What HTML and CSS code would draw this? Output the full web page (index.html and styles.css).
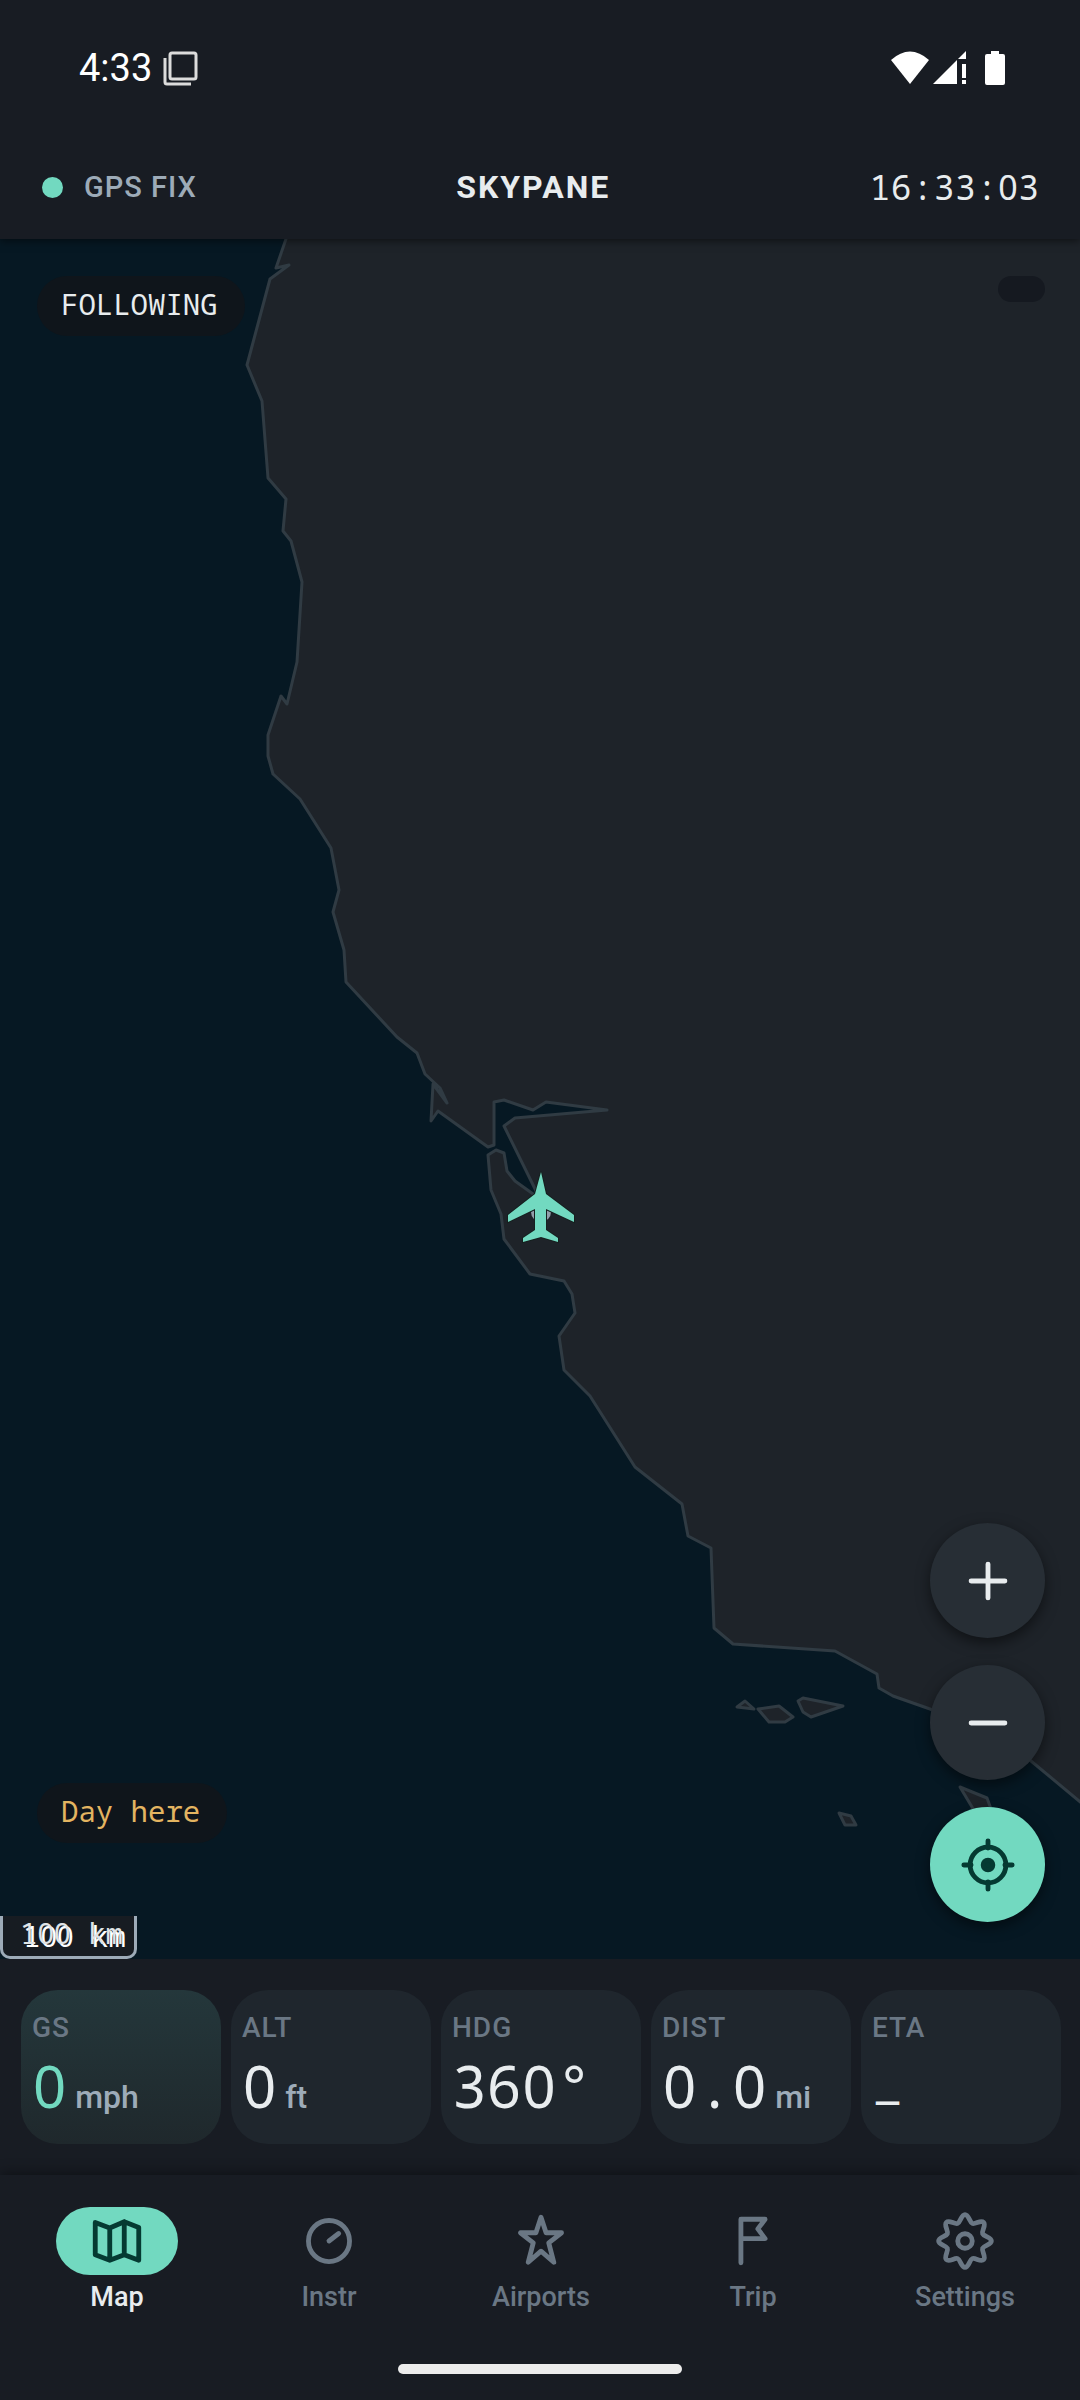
FILE: index.html
```html
<!DOCTYPE html>
<html lang="en">
<head>
  <meta charset="UTF-8">
  <meta name="viewport" content="width=device-width, initial-scale=1.0">
  <title>Skypane</title>
  <link rel="stylesheet" href="styles.css">
</head>
<body>
  <header class="top">
    <div class="status-bar">
      <div class="status-left">
        <span>4:33</span>
        <svg width="36" height="36" viewBox="0 0 36 36" fill="none" stroke="#dcdcdc" stroke-width="3">
          <rect x="8" y="3" width="26" height="26" rx="2"/>
          <path d="M3 8v24q0 2 2 2h24"/>
        </svg>
      </div>
      <svg width="116" height="36" viewBox="0 0 116 36" fill="#fff">
        <path d="M1 10Q20-7 39 10L20 34z"/>
        <path d="M43 34L67 10V34zM68 9l8-8v8zM72 14h4v14h-4zM72 30h4v4h-4z"/>
        <path d="M101 1h8v3h4q2 0 2 2v27q0 2-2 2H97q-2 0-2-2V6q0-2 2-2h4z"/>
      </svg>
    </div>
    <div class="app-bar">
      <div class="gps"><span class="gps-dot"></span>GPS FIX</div>
      <h1 class="title">SKYPANE</h1>
      <time class="clock">16:33:<span class="zero">0</span>3</time>
    </div>
  </header>

  <main class="map">
    <svg class="map-canvas" viewBox="0 239 1080 1720" preserveAspectRatio="xMidYMid slice">
      <g class="land">
        <path d="M287 236L276 268 289 265 270 279 247 365 262 401 268 478 286 499 283 531 291 541 302 582 297 662 287 704 281 696 268 735 268 756 273 774 300 799 331 848 339 890 333 912 344 950 346 982 397 1037 417 1053 425 1074 440 1088 447 1103 433 1084 431 1121 438 1111 488 1147 494 1145 494 1102 504 1100 533 1110 546 1102 607 1110 515 1118 504 1126 540 1199 515 1181 507 1171 504 1153 496 1150 488 1155 491 1190 501 1214 504 1239 530 1274 564 1281 572 1294 575 1313 559 1336 564 1370 590 1396 635 1467 682 1504 688 1536 711 1548 714 1628 733 1644 835 1651 877 1674 879 1688 893 1696 930 1709 1000 1735 1031 1761 1084 1805V236z"/>
        <path d="M737 1707l8-6 9 8z"/>
        <path d="M758 1709l21-3 14 11-8 5h-16z"/>
        <path d="M798 1701l5-3 40 8-32 11-8-5z"/>
        <path d="M839 1813l12 3 5 9h-11z"/>
        <path d="M960 1787l27 11 8 22-20-8z"/>
      </g>
      <circle cx="541" cy="1212" r="10" fill="#929eaa"/>
      <path class="plane" d="M541 1172L546 1194 574 1215V1222L546 1209V1230L558 1238V1242L541 1237 523 1242V1238L535 1230V1209L508 1222V1215L535 1194z"/>
    </svg>

    <div class="map-row">
      <div class="chip">FOLLOWING</div>
      <div class="chip chip-empty"></div>
    </div>

    <div class="map-buttons">
      <button class="fab" aria-label="Zoom in">
        <svg class="icon" viewBox="0 0 24 24"><path d="M12 5v14M5 12h14"/></svg>
      </button>
      <button class="fab" aria-label="Zoom out">
        <svg class="icon" viewBox="0 0 24 24"><path d="M5 12h14"/></svg>
      </button>
      <button class="fab fab-active" aria-label="Follow position">
        <svg class="icon" viewBox="0 0 24 24">
          <circle cx="12" cy="12" r="7.4"/>
          <circle cx="12" cy="12" r="2" fill="currentColor"/>
          <path d="M12 2v3M12 19v3M2 12h3M19 12h3"/>
        </svg>
      </button>
    </div>

    <div class="chip chip-day">Day here</div>
    <div class="scale">1<span class="zero">00</span> km</div>
  </main>

  <section class="readouts">
    <div class="tile tile-active">
      <div class="label">GS</div>
      <div class="value"><span class="zero">0</span><span class="unit">mph</span></div>
    </div>
    <div class="tile">
      <div class="label">ALT</div>
      <div class="value"><span class="zero">0</span><span class="unit">ft</span></div>
    </div>
    <div class="tile">
      <div class="label">HDG</div>
      <div class="value">36<span class="zero">0</span>°</div>
    </div>
    <div class="tile">
      <div class="label">DIST</div>
      <div class="value"><span class="zero">0</span>.<span class="zero">0</span><span class="unit">mi</span></div>
    </div>
    <div class="tile">
      <div class="label">ETA</div>
      <div class="value value-none">–</div>
    </div>
  </section>

  <footer class="bottom">
    <nav class="tabs">
      <a class="tab active" href="#map">
        <span class="tab-icon">
          <svg class="icon" viewBox="0 0 24 24"><path d="M3 4.3l6 2.3 6-2.6 6 2.4V20l-6-2.3L9 20l-6-2.3zM9 6.6V20M15 4v13.7"/></svg>
        </span>
        Map
      </a>
      <a class="tab" href="#instr">
        <span class="tab-icon">
          <svg class="icon" viewBox="0 0 24 24"><circle cx="12" cy="12" r="8.5"/><path d="M12 12l4-3.1"/></svg>
        </span>
        Instr
      </a>
      <a class="tab" href="#airports">
        <span class="tab-icon">
          <svg class="icon" viewBox="0 0 24 24"><path d="M12 2.200l2.100 6.400h6.400l-5.300 4.200 2.100 8L12 16.200l-5.300 4.600 2.100-8L3.500 8.600h6.400z"/></svg>
        </span>
        Airports
      </a>
      <a class="tab" href="#trip">
        <span class="tab-icon">
          <svg class="icon" viewBox="0 0 24 24"><path d="M7 21V3h10l-3 4 3 4H7"/></svg>
        </span>
        Trip
      </a>
      <a class="tab" href="#settings">
        <span class="tab-icon">
          <svg class="icon" viewBox="0 0 24 24">
            <circle cx="12" cy="12" r="3"/>
            <path d="M12 1.100C13.600 1.100 13.820 4.200 15.020 4.700S18.570 3.170 19.700 4.300 18.800 7.780 19.300 8.980 22.900 10.400 22.900 12 19.800 13.820 19.300 15.020 20.830 18.570 19.700 19.700 16.220 18.800 15.020 19.300 13.600 22.900 12 22.900 10.180 19.800 8.980 19.300 5.430 20.830 4.300 19.700 5.200 16.220 4.700 15.020 1.100 13.600 1.100 12 4.200 10.180 4.700 8.980 3.170 5.430 4.300 4.300 7.780 5.200 8.980 4.700 10.400 1.100 12 1.100z"/>
          </svg>
        </span>
        Settings
      </a>
    </nav>
    <div class="home-bar"></div>
  </footer>
</body>
</html>
```

FILE: styles.css
```css
* {
  box-sizing: border-box;
}

body {
  margin: 0;
  min-height: 100vh;
  display: flex;
  flex-direction: column;
  background: #181c23;
  color: #e8ecee;
  font-family: Roboto, sans-serif;
}

.icon {
  display: block;
  width: 58px;
  height: 58px;
  fill: none;
  stroke: currentColor;
  stroke-width: 2;
  stroke-linecap: round;
  stroke-linejoin: round;
}

/* header */

.top {
  position: relative;
  z-index: 1;
  background: #181c23;
  box-shadow: 0 2px 8px rgba(0, 0, 0, 0.5);
}

.status-bar {
  display: flex;
  justify-content: space-between;
  align-items: center;
  height: 135px;
  padding: 0 74px 0 79px;
  color: #fff;
  font-size: 38px;
}

.status-left {
  display: flex;
  align-items: center;
  gap: 10px;
}

.app-bar {
  display: flex;
  justify-content: space-between;
  align-items: center;
  height: 104px;
  padding: 0 40px 0 42px;
}

.gps {
  display: flex;
  align-items: center;
  gap: 21px;
  color: #9dabb8;
  font-size: 29px;
  font-weight: 500;
  letter-spacing: 1px;
}

.gps-dot {
  width: 21px;
  height: 21px;
  border-radius: 50%;
  background: #72d9c0;
}

.title {
  margin: 0;
  font-size: 32px;
  font-weight: 700;
  letter-spacing: 2px;
}

.clock,
.chip,
.scale,
.value {
  font-family: "Noto Sans Mono", "DejaVu Sans Mono", monospace;
}

/* plain zero, the mono one is slashed */
.zero {
  font-family: "Noto Sans", sans-serif;
}

.clock {
  font-size: 34px;
  line-height: 40px;
  letter-spacing: 1px;
}

/* map */

.map {
  position: relative;
  flex: 1;
  min-height: 800px;
  background: #061823;
  overflow: hidden;
}

.map-canvas {
  position: absolute;
  inset: 0;
  width: 100%;
  height: 100%;
}

.land {
  fill: #1e2329;
  stroke: #303b43;
  stroke-width: 3;
  stroke-linejoin: round;
}

.plane {
  fill: #72d9c0;
  stroke: #15201f;
  stroke-width: 2;
  paint-order: stroke;
}

.map-row {
  position: relative;
  display: flex;
  justify-content: space-between;
  align-items: flex-start;
  padding: 37px 35px 0 37px;
}

.chip {
  padding: 11px 27px 15px 24px;
  border-radius: 30px;
  background: #0f151b;
  font-size: 29px;
  line-height: 34px;
}

.chip-empty {
  width: 47px;
  height: 26px;
  padding: 0;
  border-radius: 13px;
  background: #151920;
}

.chip-day {
  position: absolute;
  left: 37px;
  bottom: 116px;
  color: #e3b461;
}

.map-buttons {
  position: absolute;
  right: 35px;
  bottom: 37px;
  display: flex;
  flex-direction: column;
  gap: 27px;
}

.fab {
  display: flex;
  justify-content: center;
  align-items: center;
  width: 115px;
  height: 115px;
  padding: 0;
  border: none;
  border-radius: 50%;
  background: #272e35;
  color: #e8ecee;
  box-shadow: 0 5px 14px rgba(0, 0, 0, 0.5);
}

.fab-active {
  background: #72d9c0;
  color: #053a32;
}

.scale {
  position: absolute;
  left: 0;
  bottom: 0;
  width: 137px;
  height: 43px;
  padding-left: 17px;
  border: 3px solid #9dabb8;
  border-top: none;
  border-radius: 0 0 10px 10px;
  background: #171c22;
  color: #dfe3e6;
  font-size: 29px;
  line-height: 34px;
  text-shadow: 3px 3px 0 #fff;
}

/* readouts */

.readouts {
  display: grid;
  grid-template-columns: repeat(5, 1fr);
  gap: 10px;
  padding: 31px 19px 31px 21px;
}

.tile {
  height: 154px;
  padding: 21px 11px 0;
  border-radius: 37px;
  background: #1f262d;
  white-space: nowrap;
}

.tile-active {
  background: linear-gradient(#24373b, #1f282c);
}

.label {
  color: #6a7784;
  font-size: 28px;
  font-weight: 500;
  line-height: 34px;
  letter-spacing: 1px;
}

.value {
  font-size: 58px;
  line-height: 82px;
}

.value .zero {
  padding: 0 1px;
}

.value-none {
  font-family: Roboto, sans-serif;
  font-size: 48px;
  line-height: 118px;
}

.tile-active .value {
  color: #72d9c0;
}

.value .unit {
  margin-left: 8px;
  color: #9dabb8;
  font-family: Roboto, sans-serif;
  font-size: 32px;
  font-weight: 500;
}

/* bottom tabs */

.bottom {
  padding-bottom: 26px;
  box-shadow: 0 -2px 12px rgba(0, 0, 0, 0.4);
}

.tabs {
  display: flex;
  padding: 32px 9px 0 11px;
}

.tab {
  flex: 1;
  display: flex;
  flex-direction: column;
  align-items: center;
  gap: 6px;
  color: #6a7784;
  font-size: 27px;
  font-weight: 500;
  line-height: 32px;
  text-decoration: none;
}

.tab-icon {
  padding: 5px 32px;
  border-radius: 34px;
}

.active {
  color: #e8ecee;
}

.active .tab-icon {
  background: #72d9c0;
  color: #053a32;
}

.home-bar {
  width: 284px;
  height: 10px;
  margin: 51px auto 0;
  border-radius: 5px;
  background: #ececec;
}
```
